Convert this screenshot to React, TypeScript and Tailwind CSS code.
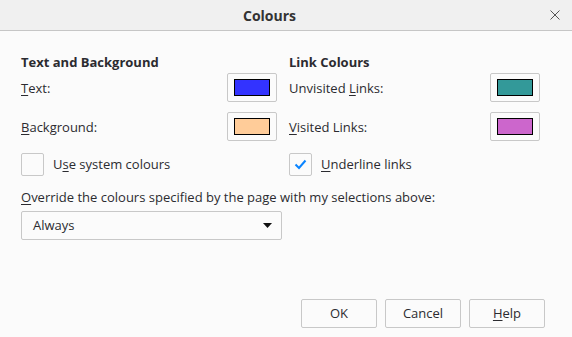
import React from "react";

const font = { fontFamily: '"Segoe UI", "Open Sans", "Noto Sans", sans-serif' };

function Swatch({ color }: { color: string }) {
  return (
    <div className="w-[50px] h-[29px] border border-[#c8c8c8] rounded-[2px] bg-[#fbfbfb] flex items-center justify-center">
      <div className={`w-[36px] h-[17px] border border-black ${color}`} />
    </div>
  );
}

function Row({ label, color }: { label: React.ReactNode; color: string }) {
  return (
    <div className="flex items-center justify-between h-[29px]">
      <span className="pt-[2px]">{label}</span>
      <Swatch color={color} />
    </div>
  );
}

function U({ children }: { children: React.ReactNode }) {
  return <span className="underline underline-offset-2 decoration-1">{children}</span>;
}

export default function App() {
  return (
    <div className="w-[572px] h-[337px] bg-[#fbfbfb] text-[13px] text-[#2b2b30] flex flex-col overflow-hidden" style={font}>
      <div className="h-[31px] bg-[#f0f0f0] border-b border-[#c6c6c6] flex items-center justify-center pr-[33px] relative shrink-0">
        <span className="font-bold text-[#333] text-[14px] pt-[1px]">Colours</span>
        <svg className="absolute right-[12px] top-[10px]" width="10" height="10" viewBox="0 0 10 10">
          <path d="M0.5 0.5 L9.5 9.5 M9.5 0.5 L0.5 9.5" stroke="#555" strokeWidth="1" />
        </svg>
      </div>
      <div className="pl-[21px] pt-[22px] flex flex-col">
        <div className="grid grid-cols-[256px_251px] gap-x-[12px]">
          <div className="flex flex-col">
            <div className="font-bold h-[20px] leading-[18px]">Text and Background</div>
            <div className="flex flex-col gap-[10px]">
              <Row label={<><U>T</U>ext:</>} color="bg-[#3333ff]" />
              <Row label={<><U>B</U>ackground:</>} color="bg-[#ffcc99]" />
            </div>
          </div>
          <div className="flex flex-col">
            <div className="font-bold h-[20px] leading-[18px]">Link Colours</div>
            <div className="flex flex-col gap-[10px]">
              <Row label={<>Unvisited <U>L</U>inks:</>} color="bg-[#339999]" />
              <Row label={<><U>V</U>isited Links:</>} color="bg-[#cc66cc]" />
            </div>
          </div>
          <div className="flex items-center gap-[9px] mt-[12px] h-[23px]">
            <div className="w-[23px] h-[23px] border border-[#c8c8c8] rounded-[2px] bg-[#fbfbfb]" />
            <span className="pt-[1px]">U<U>s</U>e system colours</span>
          </div>
          <div className="flex items-center gap-[9px] mt-[12px] h-[23px]">
            <div className="w-[23px] h-[23px] border border-[#c8c8c8] rounded-[2px] bg-[#fbfbfb] flex items-center justify-center">
              <svg width="13" height="11" viewBox="0 0 13 11">
                <path d="M1.5 5.5 L5 9 L11.5 1.5" fill="none" stroke="#0a84ff" strokeWidth="2" />
              </svg>
            </div>
            <span className="pt-[1px]"><U>U</U>nderline links</span>
          </div>
        </div>
        <div className="mt-[12px] h-[18px] leading-[18px]"><U>O</U>verride the colours specified by the page with my selections above:</div>
        <div className="mt-[5px] w-[261px] h-[29px] border border-[#c8c8c8] rounded-[2px] bg-[#fbfbfb] flex items-center justify-between pl-[11px] pr-[9px]">
          <span>Always</span>
          <svg width="9" height="5" viewBox="0 0 9 5"><path d="M0 0 H9 L4.5 5 Z" fill="#111" /></svg>
        </div>
      </div>
      <div className="flex-1" />
      <div className="flex justify-end gap-[8px] pr-[27px] pb-[9px]">
        <button className="w-[76px] h-[29px] border border-[#c8c8c8] rounded-[2px] bg-[#fbfbfb]">OK</button>
        <button className="w-[76px] h-[29px] border border-[#c8c8c8] rounded-[2px] bg-[#fbfbfb]">Cancel</button>
        <button className="w-[76px] h-[29px] border border-[#c8c8c8] rounded-[2px] bg-[#fbfbfb]"><U>H</U>elp</button>
      </div>
    </div>
  );
}
